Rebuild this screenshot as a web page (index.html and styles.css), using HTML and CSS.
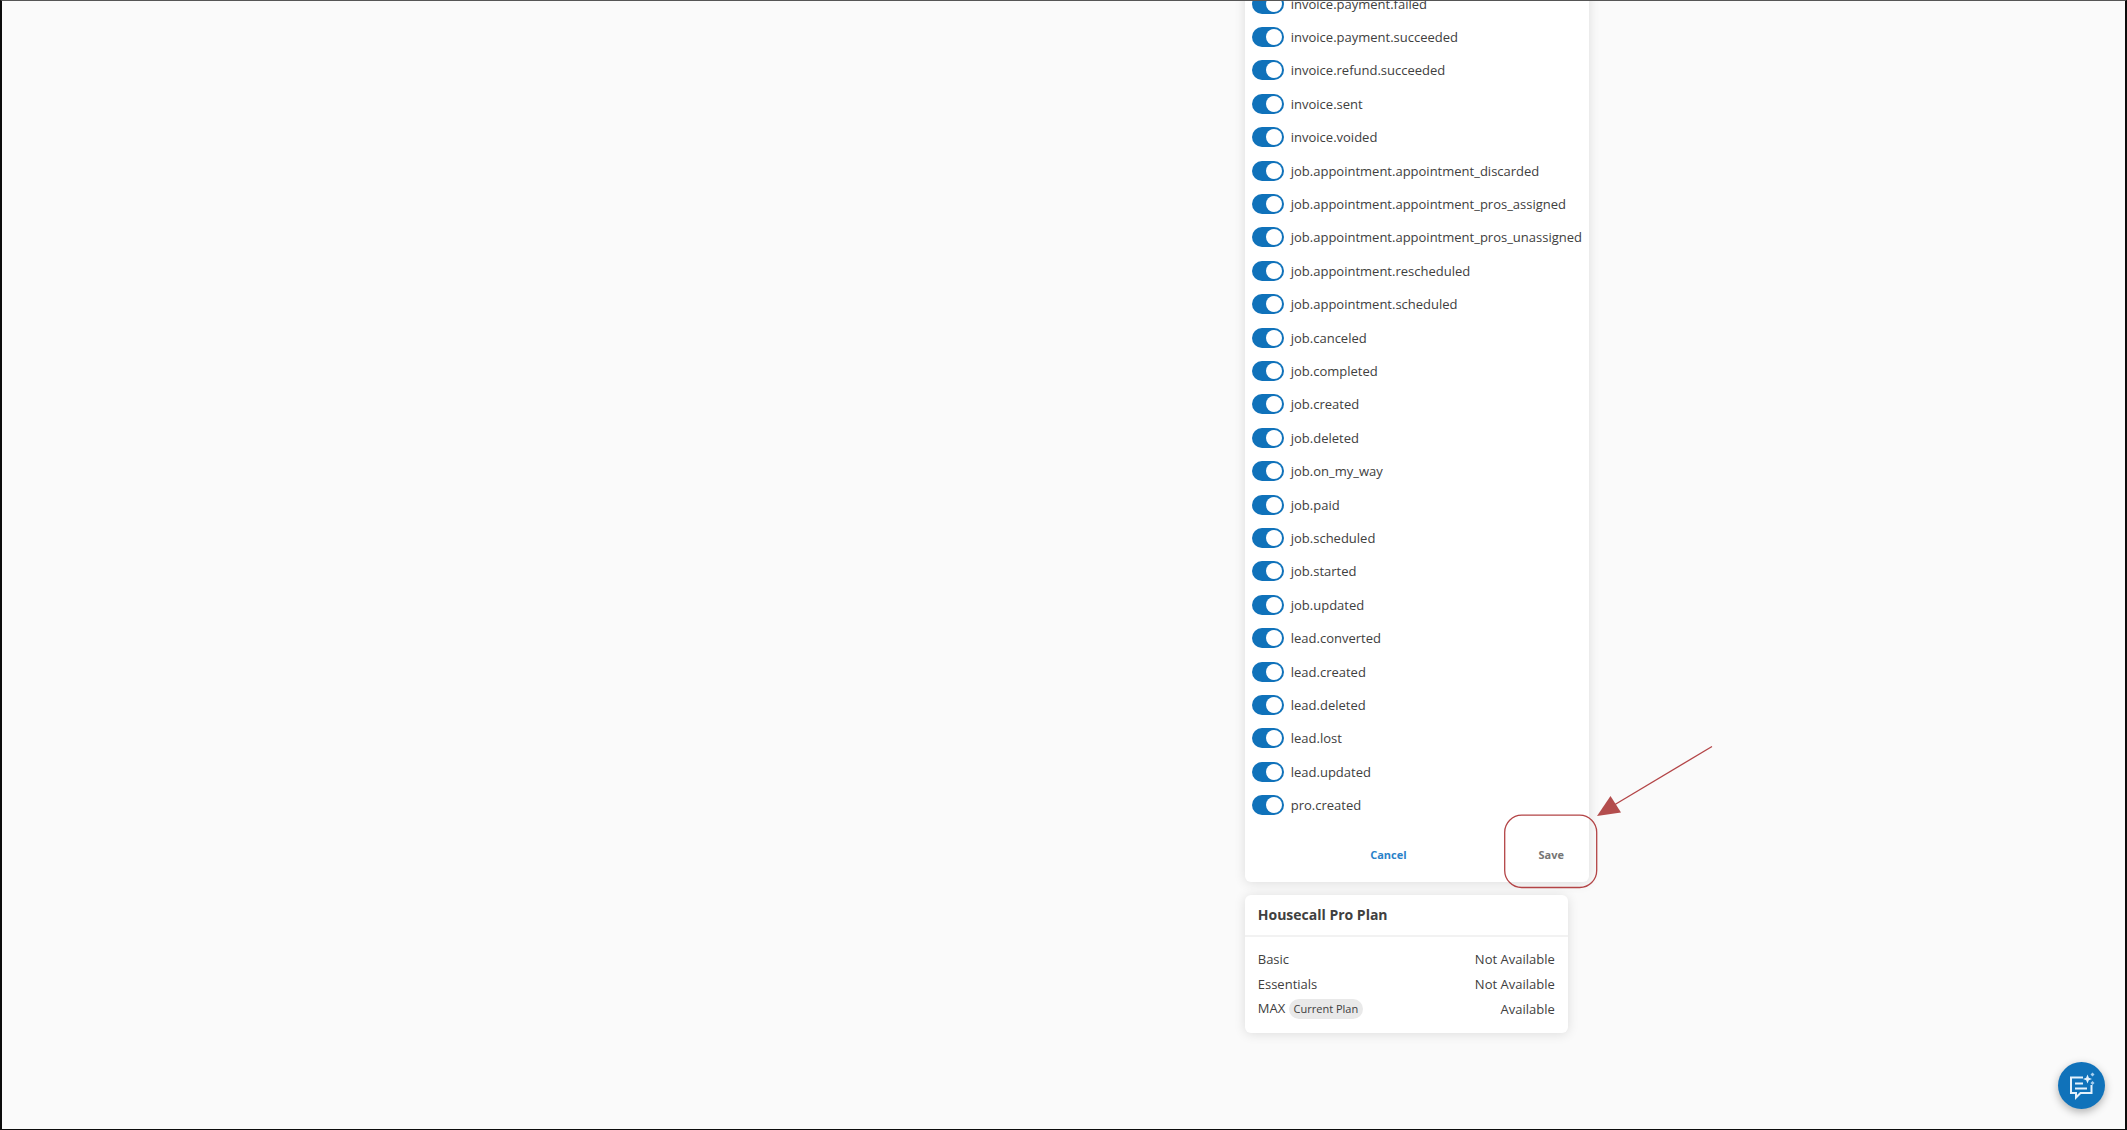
FILE: index.html
```html
<!DOCTYPE html>
<html lang="en">
<head>
  <meta charset="UTF-8" />
  <meta name="viewport" content="width=device-width, initial-scale=1" />
  <title>Webhooks - Housecall Pro</title>
  <link rel="stylesheet" href="styles.css">
</head>
<body>

<main class="page">
  <div class="column">
    <form class="card events-card">
      <ul class="event-list">
        <li><label class="event"><input type="checkbox" class="switch" checked />invoice.payment.failed</label></li>
        <li><label class="event"><input type="checkbox" class="switch" checked />invoice.payment.succeeded</label></li>
        <li><label class="event"><input type="checkbox" class="switch" checked />invoice.refund.succeeded</label></li>
        <li><label class="event"><input type="checkbox" class="switch" checked />invoice.sent</label></li>
        <li><label class="event"><input type="checkbox" class="switch" checked />invoice.voided</label></li>
        <li><label class="event"><input type="checkbox" class="switch" checked />job.appointment.appointment_discarded</label></li>
        <li><label class="event"><input type="checkbox" class="switch" checked />job.appointment.appointment_pros_assigned</label></li>
        <li><label class="event"><input type="checkbox" class="switch" checked />job.appointment.appointment_pros_unassigned</label></li>
        <li><label class="event"><input type="checkbox" class="switch" checked />job.appointment.rescheduled</label></li>
        <li><label class="event"><input type="checkbox" class="switch" checked />job.appointment.scheduled</label></li>
        <li><label class="event"><input type="checkbox" class="switch" checked />job.canceled</label></li>
        <li><label class="event"><input type="checkbox" class="switch" checked />job.completed</label></li>
        <li><label class="event"><input type="checkbox" class="switch" checked />job.created</label></li>
        <li><label class="event"><input type="checkbox" class="switch" checked />job.deleted</label></li>
        <li><label class="event"><input type="checkbox" class="switch" checked />job.on_my_way</label></li>
        <li><label class="event"><input type="checkbox" class="switch" checked />job.paid</label></li>
        <li><label class="event"><input type="checkbox" class="switch" checked />job.scheduled</label></li>
        <li><label class="event"><input type="checkbox" class="switch" checked />job.started</label></li>
        <li><label class="event"><input type="checkbox" class="switch" checked />job.updated</label></li>
        <li><label class="event"><input type="checkbox" class="switch" checked />lead.converted</label></li>
        <li><label class="event"><input type="checkbox" class="switch" checked />lead.created</label></li>
        <li><label class="event"><input type="checkbox" class="switch" checked />lead.deleted</label></li>
        <li><label class="event"><input type="checkbox" class="switch" checked />lead.lost</label></li>
        <li><label class="event"><input type="checkbox" class="switch" checked />lead.updated</label></li>
        <li><label class="event"><input type="checkbox" class="switch" checked />pro.created</label></li>
      </ul>
      <div class="actions">
        <button type="button" class="btn btn-cancel">Cancel</button>
        <button type="submit" class="btn btn-save">Save</button>
        <svg class="callout" width="210" height="144" viewBox="0 0 210 144" aria-hidden="true">
          <rect x="0.7" y="70.2" width="92" height="72.3" rx="17" fill="none" stroke="#b34446" stroke-width="1.3" />
          <path d="M208 1.5 L111 59.5" stroke="#b34446" stroke-width="1.3" />
          <path d="M93 71 L106.5 51 L117 67.5 Z" fill="#b34d4d" />
        </svg>
      </div>
    </form>

    <section class="card plan-card">
      <h2 class="plan-title">Housecall Pro Plan</h2>
      <table class="plan-table">
        <tr><th scope="row">Basic</th><td>Not Available</td></tr>
        <tr><th scope="row">Essentials</th><td>Not Available</td></tr>
        <tr><th scope="row">MAX <span class="chip">Current Plan</span></th><td>Available</td></tr>
      </table>
    </section>
  </div>
</main>

<button type="button" class="chat-btn" aria-label="Open chat">
  <svg width="28" height="28" viewBox="0 0 28 28" fill="none" stroke="#e4f1fb" stroke-width="2">
    <path d="M15 5.5 H3 V21 H8 V25.5 L12.5 21 H23.5 V13" />
    <path d="M7 11.5 H15 M7 16.5 H19" />
    <path d="M19.5 2.5 L20.8 5.7 L24 7 L20.8 8.3 L19.5 11.5 L18.2 8.3 L15 7 L18.2 5.7 Z" fill="#e4f1fb" stroke="none" />
    <path d="M24.5 0.5 L26.5 2.5 L24.5 4.5 L22.5 2.5 Z M24.5 9 L26.5 11 L24.5 13 L22.5 11 Z" fill="#a9d0ef" stroke="none" />
  </svg>
</button>
<div class="frame"></div>

</body>
</html>
```
FILE: styles.css
```css
* {
  margin: 0; padding: 0; box-sizing: border-box;
}
body {
  background-color: #fafafa;
  color: #404040;
  font-family: 'Open Sans', 'Noto Sans', sans-serif;
  font-size: 13px;
  overflow: hidden;
}
.frame {
  position: fixed;
  inset: 0;
  border: 2px solid #0c0c0c;
  border-top: 1px solid #555;
  border-bottom-width: 1px;
  pointer-events: none;
}
.page {
  display: grid;
  grid-template-columns: 7fr 5fr;
  height: 100vh;
}
.column {
  grid-column: 2;
  display: flex;
  flex-direction: column;
  align-items: flex-start;
  gap: 13px;
  padding: 0 4px 97px;
}
.card {
  background: white;
  border-radius: 6px;
  box-shadow: 0 1px 12px rgba(0,0,0,0.12);
}
.events-card {
  display: flex;
  flex-direction: column;
  flex: 1;
  margin-top: -13px;
  padding: 0 7px;
}
.event-list {
  display: grid;
  grid-auto-rows: 1fr;
  flex: 1;
  list-style: none;
}
.event {
  display: flex;
  align-items: center;
  gap: 7px;
  height: 100%;
  cursor: pointer;
}
.switch {
  appearance: none;
  display: flex;
  align-items: center;
  width: 32px;
  height: 20px;
  padding: 2px;
  border-radius: 10px;
  background: #bbb;
  cursor: pointer;
}
.switch::before {
  content: "";
  width: 16px;
  height: 16px;
  border-radius: 50%;
  background: white;
}
.switch:checked {
  justify-content: flex-end;
  background: #1072ba;
}
.actions {
  position: relative;
  display: flex;
  justify-content: flex-end;
  align-items: center;
  gap: 96px;
  height: 60px;
  padding-top: 4px;
}
.btn {
  padding: 8px 18px;
  border: none;
  background: none;
  font-family: inherit;
  font-size: 11px;
  font-weight: 700;
  cursor: pointer;
}
.btn-cancel {
  color: #2a82c9;
}
.btn-save {
  color: #757575;
}
.callout {
  position: absolute;
  right: -132px;
  bottom: -7px;
  pointer-events: none;
}
.plan-card {
  width: 323px;
  padding-bottom: 12px;
}
.plan-title {
  padding: 0 13px;
  border-bottom: 2px solid #f2f2f2;
  font-size: 14px;
  font-weight: 700;
  line-height: 40px;
}
.plan-table {
  width: 100%;
  margin-top: 9px;
  border-collapse: collapse;
}
.plan-table th,
.plan-table td {
  height: 25px;
  padding: 0 13px;
  font-weight: 400;
  text-align: left;
}
.plan-table td {
  text-align: right;
}
.chip {
  display: inline-block;
  padding: 0 5px;
  border-radius: 10px;
  background: #e9e9e9;
  font-size: 11px;
  line-height: 20px;
}
.chat-btn {
  position: fixed;
  right: 22px;
  bottom: 21px;
  display: flex;
  align-items: center;
  justify-content: center;
  width: 47px;
  height: 47px;
  border: none;
  border-radius: 50%;
  background: #1072ba;
  box-shadow: 0 3px 8px rgba(0,0,0,0.3);
  cursor: pointer;
}
```
